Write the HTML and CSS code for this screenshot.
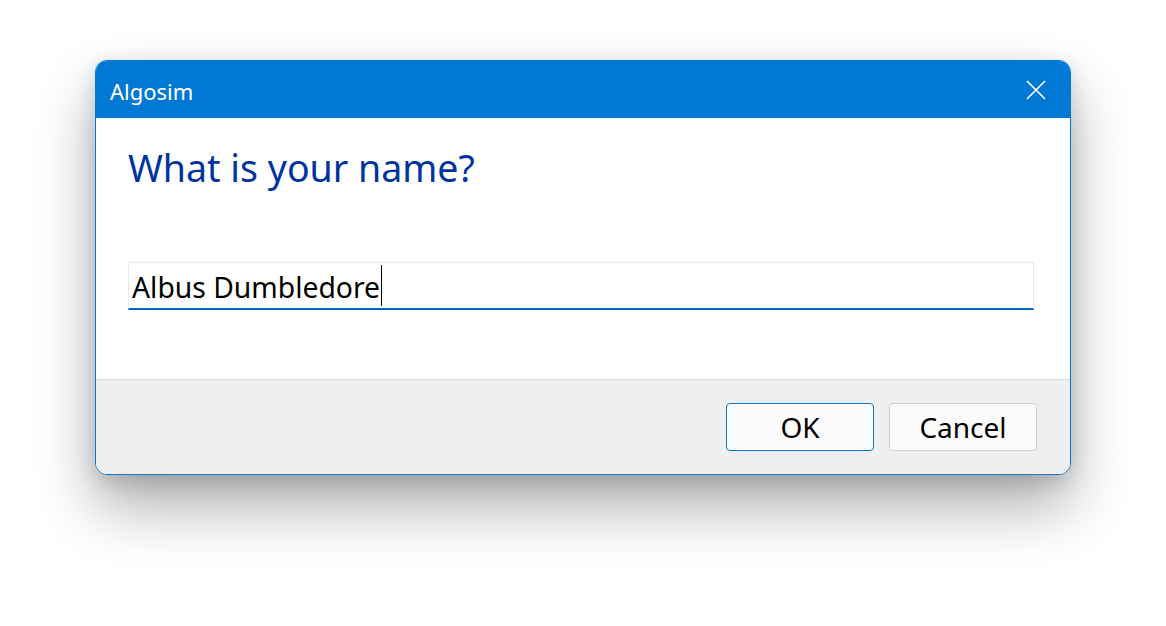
FILE: index.html
```html
<!DOCTYPE html>
<html>
<head>
<meta charset="utf-8">
<link rel="stylesheet" href="styles.css">
</head>
<body>
<div class="stage">
  <div class="dialog">
    <div class="titlebar">
      <span class="title">Algosim</span>
      <span class="close">
        <svg width="20" height="20" viewBox="0 0 20 20"><path d="M1 1 L19 19 M19 1 L1 19" stroke="#fff" stroke-width="1.6" fill="none"/></svg>
      </span>
    </div>
    <div class="body">
      <h1 class="question">What is your name?</h1>
      <div class="input"><span class="value">Albus Dumbledore</span><span class="caret"></span></div>
    </div>
    <div class="footer">
      <button class="btn btn-default">OK</button>
      <button class="btn">Cancel</button>
    </div>
  </div>
</div>
</body>
</html>
```

FILE: styles.css
```css
* {
  box-sizing: border-box;
}
html, body {
  margin: 0;
  padding: 0;
  background: #ffffff;
  width: 1166px;
  height: 626px;
  overflow: hidden;
}
.stage {
  padding: 60px 0 0 95px;
  font-family: "Noto Sans", "Open Sans", sans-serif;
}
.dialog {
  width: 976px;
  height: 415px;
  border: 1px solid #0078d4;
  border-radius: 12px;
  background: #ffffff;
  overflow: hidden;
  display: flex;
  flex-direction: column;
  box-shadow: 0 32px 60px rgba(0,0,0,0.32), 0 6px 20px rgba(0,0,0,0.14);
}
.titlebar {
  height: 57px;
  flex: none;
  background: #0078d4;
  display: flex;
  align-items: center;
  justify-content: space-between;
  padding: 0 24px 0 14px;
  color: #fff;
}
.title {
  font-size: 22px;
  margin-top: 2px;
}
.close {
  display: flex;
  width: 20px;
  height: 20px;
}
.body {
  flex: 1;
  padding: 0 36px 0 32px;
  display: flex;
  flex-direction: column;
}
.question {
  margin: 26px 0 0 0;
  font-weight: normal;
  font-size: 37.5px;
  line-height: 48px;
  color: #0033a0;
}
.input {
  margin-top: 70px;
  height: 48px;
  border: 1px solid #e8e8e8;
  border-bottom: 2px solid #0067c0;
  display: flex;
  align-items: center;
  padding: 2px 0 0 3px;
  font-size: 28.3px;
  color: #000;
}
.caret {
  width: 1px;
  height: 41px;
  background: #000;
  margin-left: 1px;
  margin-top: -2px;
}
.footer {
  height: 95px;
  flex: none;
  background: #efefef;
  border-top: 1px solid #dcdcdc;
  display: flex;
  justify-content: flex-end;
  align-items: flex-start;
  gap: 15px;
  padding: 23px 33px 0 0;
}
.btn {
  width: 148px;
  height: 48px;
  border: 1px solid #d0d0d0;
  border-radius: 4px;
  background: #fbfbfb;
  font-family: "Noto Sans", "Open Sans", sans-serif;
  font-size: 28px;
  color: #000;
  padding: 0;
}
.btn-default {
  border-color: #0078d4;
}
```
